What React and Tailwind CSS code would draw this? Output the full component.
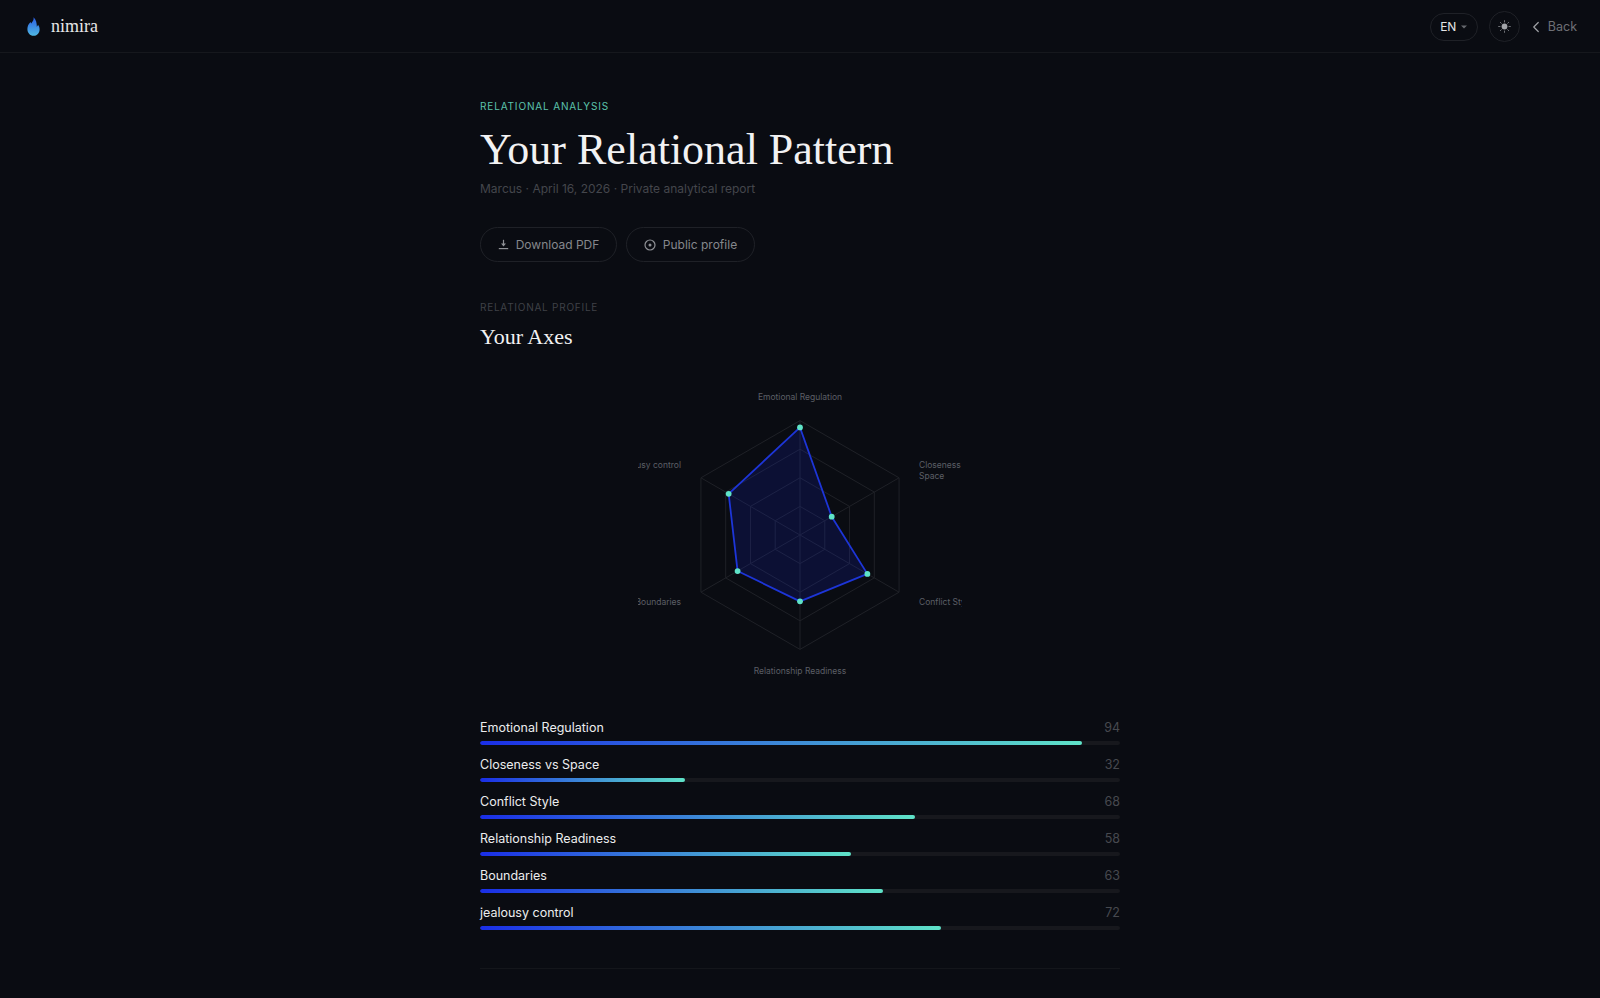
import React from 'react';
import { ChevronLeft } from 'lucide-react';

const axes = [
  { name: 'Emotional Regulation', value: 94 },
  { name: 'Closeness vs Space', value: 32 },
  { name: 'Conflict Style', value: 68 },
  { name: 'Relationship Readiness', value: 58 },
  { name: 'Boundaries', value: 63 },
  { name: 'jealousy control', value: 72 },
];

const CX = 162;
const CY = 154;
const R = 114.4;

function pt(i, r) {
  const a = (Math.PI / 3) * i - Math.PI / 2;
  return [CX + r * Math.cos(a), CY + r * Math.sin(a)];
}

function poly(r) {
  return [0, 1, 2, 3, 4, 5].map(i => pt(i, r).join(',')).join(' ');
}

function Radar() {
  const shape = axes.map((a, i) => pt(i, (R * a.value) / 100));
  return (
    <svg width="324" height="308" viewBox="0 0 324 308" className="block overflow-hidden">
      {[0.25, 0.5, 0.75, 1].map(f => (
        <polygon key={f} points={poly(R * f)} fill="none" stroke="#1f2127" strokeWidth="1" />
      ))}
      {[0, 1, 2, 3, 4, 5].map(i => {
        const [x, y] = pt(i, R);
        return <line key={i} x1={CX} y1={CY} x2={x} y2={y} stroke="#1f2127" strokeWidth="1" />;
      })}
      <polygon points={shape.map(p => p.join(',')).join(' ')} fill="#1a2be0" fillOpacity="0.17" stroke="#1d35d8" strokeWidth="1.8" strokeLinejoin="round" />
      {shape.map((p, i) => <circle key={i} cx={p[0]} cy={p[1]} r="2.9" fill="#5fe3c8" />)}
      <g fill="#5c5f66" fontSize="8.5" fontFamily="Inter, sans-serif">
        <text x={CX} y={19} textAnchor="middle">Emotional Regulation</text>
        <text x={281} y={87}>Closeness</text>
        <text x={281} y={98}>Space</text>
        <text x={281} y={224}>Conflict Style</text>
        <text x={CX} y={293} textAnchor="middle">Relationship Readiness</text>
        <text x={43} y={224} textAnchor="end">Boundaries</text>
        <text x={43} y={87} textAnchor="end">jealousy control</text>
      </g>
    </svg>
  );
}

function Flame() {
  return (
    <svg width="13" height="19" viewBox="0 0 13 19">
      <defs>
        <linearGradient id="flame" x1="0" y1="0" x2="0" y2="1">
          <stop offset="0" stopColor="#2a5de6" />
          <stop offset="1" stopColor="#4fb8e2" />
        </linearGradient>
      </defs>
      <path d="M6.6 0.2C7 3 5.6 4.6 4.2 6.4 3.9 6 3.7 5.5 3.6 5 1.6 6.8 0.4 9.2 0.4 12 0.4 15.9 3 18.8 6.5 18.8 10 18.8 12.6 16 12.6 12.4 12.6 10.6 12 9 11 7.8 10.8 8.6 10.4 9.3 9.8 9.8 10 6.2 9 2.6 6.6 0.2Z" fill="url(#flame)" />
    </svg>
  );
}

function SunIcon() {
  return (
    <svg width="13" height="13" viewBox="0 0 13 13" stroke="#77797f" strokeWidth="0.9" strokeLinecap="round">
      <circle cx="6.5" cy="6.5" r="2.9" fill="#a2a4a9" stroke="none" />
      <path d="M6.5.6v1.4M6.5 11v1.4M.6 6.5H2M11 6.5h1.4M2.3 2.3l1 1M9.7 9.7l1 1M2.3 10.7l1-1M9.7 3.3l1-1" />
    </svg>
  );
}

function DownloadIcon() {
  return (
    <svg width="11" height="11" viewBox="0 0 11 11" fill="none" stroke="#8f9196" strokeWidth="1.2">
      <path d="M5.5 .8v5" />
      <path d="M3 4.6h5L5.5 7.6Z" fill="#8f9196" stroke="none" />
      <path d="M.8 9.6h9.4" />
    </svg>
  );
}

function ProfileIcon() {
  return (
    <svg width="12" height="12" viewBox="0 0 12 12" fill="none" stroke="#8f9196" strokeWidth="1.2">
      <circle cx="6" cy="6" r="5" />
      <circle cx="6" cy="6" r="1.5" fill="#8f9196" stroke="none" />
    </svg>
  );
}

function AxisRow({ name, value }) {
  return (
    <div className="h-[37px]">
      <div className="flex justify-between items-center h-[22px]">
        <span className="text-[12.5px] text-[#ececee]">{name}</span>
        <span className="text-[12.5px] text-[#47494f]">{value}</span>
      </div>
      <div className="mt-[2px] h-1 rounded-full bg-[#17181d] overflow-hidden">
        <div
          className="h-full rounded-full bg-[linear-gradient(to_right,#1a2ee6,#5fe3c8)]"
          style={{ width: `${value}%` }}
        />
      </div>
    </div>
  );
}

export default function App() {
  return (
    <div className="min-h-screen bg-[#0a0c12] text-white font-['Inter',sans-serif]">
      {/* Top bar */}
      <header className="h-[53px] pt-[1px] border-b border-[#16181d] flex items-center justify-between pl-[27px] pr-[23px]">
        <div className="flex items-center gap-[11px]">
          <Flame />
          <span className="font-['Liberation_Serif',serif] text-[18px] text-[#e6e6e8]">nimira</span>
        </div>
        <div className="flex items-center">
          <button className="h-[28px] w-[48px] rounded-full border border-[#1f2127] flex items-center justify-center gap-[5px] text-[12px] text-[#e4e4e6]">
            EN
            <svg width="6" height="4" viewBox="0 0 6 4"><path d="M0 .5h6L3 3.5Z" fill="#66686e" /></svg>
          </button>
          <button className="ml-[11px] w-[31px] h-[31px] rounded-full border border-[#1f2127] flex items-center justify-center">
            <SunIcon />
          </button>
          <button className="ml-[7px] flex items-center gap-[3px] text-[12.5px] text-[#6e7076]">
            <ChevronLeft size={18} strokeWidth={1.6} className="text-[#a0a2a6]" />
            <span className="mt-[2px]">Back</span>
          </button>
        </div>
      </header>

      <main className="w-[640px] mx-auto">
        <p className="mt-[46px] text-[10px] leading-[14px] tracking-[0.85px] text-[#5cc4ac]">RELATIONAL ANALYSIS</p>
        <h1 className="mt-[9px] font-['Liberation_Serif',serif] text-[44px] leading-[56px] text-[#f2f2f3]">Your Relational Pattern</h1>
        <p className="mt-[2px] text-[12px] leading-[18px] text-[#44464c]">Marcus · April 16, 2026 · Private analytical report</p>

        <div className="mt-[29px] flex gap-[9px]">
          <button className="h-[35px] w-[137px] rounded-full border border-[#1f2127] flex items-center justify-center gap-[7px] text-[12px] text-[#85878c]">
            <DownloadIcon />
            Download PDF
          </button>
          <button className="h-[35px] w-[129px] rounded-full border border-[#1f2127] flex items-center justify-center gap-[7px] text-[12px] text-[#85878c]">
            <ProfileIcon />
            Public profile
          </button>
        </div>

        <p className="mt-[38px] text-[10px] leading-[14px] tracking-[0.75px] text-[#3f4147]">RELATIONAL PROFILE</p>
        <h2 className="mt-[7px] font-['Liberation_Serif',serif] text-[22px] leading-[32px] text-[#f2f2f3]">Your Axes</h2>

        <div className="mt-[28px] flex justify-center">
          <Radar />
        </div>

        <div className="mt-[28px]">
          {axes.map(a => <AxisRow key={a.name} name={a.name} value={a.value} />)}
        </div>

        <div className="mt-[29px] border-t border-[#14161b]" />
      </main>
    </div>
  );
}
